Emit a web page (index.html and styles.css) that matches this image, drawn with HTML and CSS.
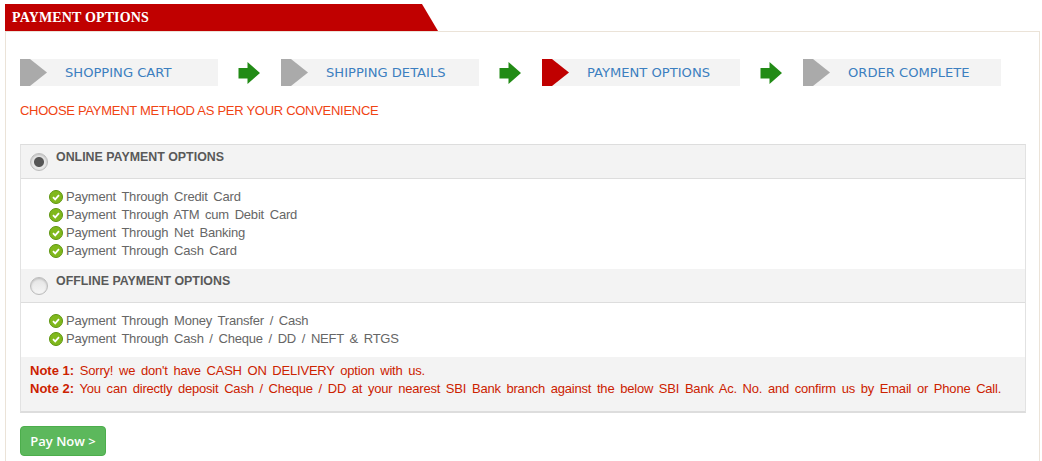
FILE: index.html
```html
<!DOCTYPE html>
<html lang="en">
<head>
    <meta charset="UTF-8">
    <meta name="viewport" content="width=device-width, initial-scale=1.0">
    <title>Payment Options</title>
    <link rel="stylesheet" href="styles.css">
</head>
<body>
    <div class="page">
        <div class="heading-row">
            <h1 class="heading">PAYMENT OPTIONS</h1>
            <svg class="heading-cut" width="16" height="27" viewBox="0 0 16 27"><polygon points="0,0 0,27 16,27" fill="#c00000"/></svg>
        </div>
        <div class="panel">
            <div class="steps">
                <div class="step">
                    <span class="step-mark"></span>
                    <span class="step-label">SHOPPING CART</span>
                </div>
                <svg class="step-arrow" width="22" height="22" viewBox="0 0 22 22"><polygon points="0.5,6 9.5,6 9.5,0 22,11 9.5,22 9.5,16.5 0.5,16.5" fill="#228b16"/></svg>
                <div class="step">
                    <span class="step-mark"></span>
                    <span class="step-label">SHIPPING DETAILS</span>
                </div>
                <svg class="step-arrow" width="22" height="22" viewBox="0 0 22 22"><polygon points="0.5,6 9.5,6 9.5,0 22,11 9.5,22 9.5,16.5 0.5,16.5" fill="#228b16"/></svg>
                <div class="step active">
                    <span class="step-mark"></span>
                    <span class="step-label">PAYMENT OPTIONS</span>
                </div>
                <svg class="step-arrow" width="22" height="22" viewBox="0 0 22 22"><polygon points="0.5,6 9.5,6 9.5,0 22,11 9.5,22 9.5,16.5 0.5,16.5" fill="#228b16"/></svg>
                <div class="step">
                    <span class="step-mark"></span>
                    <span class="step-label">ORDER COMPLETE</span>
                </div>
            </div>

            <h2 class="choose">CHOOSE PAYMENT METHOD AS PER YOUR CONVENIENCE</h2>

            <div class="methods">
                <div class="method-head">
                    <span class="radio checked"></span>
                    <h3>ONLINE PAYMENT OPTIONS</h3>
                </div>
                <ul class="method-list">
                    <li><svg class="tick" width="14" height="14" viewBox="0 0 14 14"><circle cx="7" cy="7" r="6.5" fill="#80b81c" stroke="#5d9410"/><path d="M4 7.2 6.2 9.4 10 5.2" fill="none" stroke="#fff" stroke-width="1.8"/></svg>Payment Through Credit Card</li>
                    <li><svg class="tick" width="14" height="14" viewBox="0 0 14 14"><circle cx="7" cy="7" r="6.5" fill="#80b81c" stroke="#5d9410"/><path d="M4 7.2 6.2 9.4 10 5.2" fill="none" stroke="#fff" stroke-width="1.8"/></svg>Payment Through ATM cum Debit Card</li>
                    <li><svg class="tick" width="14" height="14" viewBox="0 0 14 14"><circle cx="7" cy="7" r="6.5" fill="#80b81c" stroke="#5d9410"/><path d="M4 7.2 6.2 9.4 10 5.2" fill="none" stroke="#fff" stroke-width="1.8"/></svg>Payment Through Net Banking</li>
                    <li><svg class="tick" width="14" height="14" viewBox="0 0 14 14"><circle cx="7" cy="7" r="6.5" fill="#80b81c" stroke="#5d9410"/><path d="M4 7.2 6.2 9.4 10 5.2" fill="none" stroke="#fff" stroke-width="1.8"/></svg>Payment Through Cash Card</li>
                </ul>
                <div class="method-head">
                    <span class="radio"></span>
                    <h3>OFFLINE PAYMENT OPTIONS</h3>
                </div>
                <ul class="method-list short">
                    <li><svg class="tick" width="14" height="14" viewBox="0 0 14 14"><circle cx="7" cy="7" r="6.5" fill="#80b81c" stroke="#5d9410"/><path d="M4 7.2 6.2 9.4 10 5.2" fill="none" stroke="#fff" stroke-width="1.8"/></svg>Payment Through Money Transfer / Cash</li>
                    <li><svg class="tick" width="14" height="14" viewBox="0 0 14 14"><circle cx="7" cy="7" r="6.5" fill="#80b81c" stroke="#5d9410"/><path d="M4 7.2 6.2 9.4 10 5.2" fill="none" stroke="#fff" stroke-width="1.8"/></svg>Payment Through Cash / Cheque / DD / NEFT &amp; RTGS</li>
                </ul>
                <div class="notes">
                    <p><strong>Note 1:</strong> Sorry! we don't have CASH ON DELIVERY option with us.</p>
                    <p><strong>Note 2:</strong> You can directly deposit Cash / Cheque / DD at your nearest SBI Bank branch against the below SBI Bank Ac. No. and confirm us by Email or Phone Call.</p>
                </div>
            </div>

            <button class="pay-button">Pay Now &gt;</button>
        </div>
    </div>
</body>
</html>
```
FILE: styles.css
```css
* {
    margin: 0;
    padding: 0;
    box-sizing: border-box;
}
body {
    background-color: #fff;
    font-family: "Liberation Sans", Arial, sans-serif;
    overflow: hidden;
    height: 461px;
}
.page {
    padding: 4px 2px 0 5px;
}
.heading-row {
    display: flex;
    height: 27px;
}
.heading {
    background-color: #c00000;
    color: #fff;
    width: 417px;
    padding-left: 7px;
    font-family: "Liberation Serif", serif;
    font-size: 14px;
    font-weight: bold;
    letter-spacing: 0.15px;
    line-height: 27px;
}
.panel {
    border: 1px solid #ebe3d8;
    border-bottom: none;
    padding: 27px 13px 0 14px;
    height: 430px;
}
.steps {
    display: flex;
    align-items: center;
}
.step {
    display: flex;
    align-items: center;
    width: 198px;
    height: 27px;
    background-color: #f3f3f3;
}
.step-mark {
    width: 27px;
    height: 27px;
    background-color: #aaa;
    clip-path: polygon(0 0, 10px 0, 27px 13.5px, 10px 27px, 0 27px);
}
.step.active .step-mark {
    background-color: #c00000;
}
.step-label {
    margin-left: 18px;
    color: #3c7fc0;
    font-family: "DejaVu Sans", Verdana, sans-serif;
    font-size: 13.1px;
    white-space: nowrap;
}
.step-arrow {
    margin: 0 21px 0 20px;
}
.choose {
    margin-top: 16px;
    color: #f04313;
    font-size: 13px;
    font-weight: normal;
    letter-spacing: -0.28px;
    line-height: 18px;
}
.methods {
    margin-top: 24px;
    width: 1006px;
    height: 269px;
    border: 1px solid #e2e2e2;
    border-top-color: #ddd;
    border-bottom: 2px solid #ddd;
}
.method-head {
    display: flex;
    height: 34px;
    background-color: #f3f3f3;
    border-bottom: 1px solid #ddd;
}
.method-head h3 {
    margin: 5px 0 0 8px;
    color: #595959;
    font-size: 12.4px;
    font-weight: bold;
    line-height: 14px;
}
.radio {
    flex: none;
    width: 18px;
    height: 18px;
    margin: 8px 0 0 9px;
    border: 1px solid #bbb;
    border-radius: 50%;
    background: linear-gradient(#e4e4e4, #f6f6f6);
    box-shadow: inset 0 1px 2px #bbb;
}
.radio.checked {
    background: radial-gradient(circle, #555 0, #555 4.5px, #e6e6e6 5.5px);
}
.method-list {
    list-style-type: none;
    height: 90px;
    padding: 9px 0 0 28px;
    color: #666;
    font-size: 13px;
    letter-spacing: -0.2px;
    line-height: 18px;
    word-spacing: 2.3px;
}
.method-list.short {
    height: 54px;
}
.tick {
    margin-right: 3px;
    vertical-align: -3px;
}
.notes {
    height: 54px;
    padding: 5px 0 0 9px;
    background-color: #f3f3f3;
    color: #cc2200;
    font-size: 13px;
    letter-spacing: -0.2px;
    line-height: 18px;
    word-spacing: 2.3px;
}
.notes strong {
    letter-spacing: 0;
    word-spacing: 0;
}
.pay-button {
    display: block;
    margin-top: 13px;
    width: 86px;
    height: 30px;
    background-color: #5cb85c;
    border: 1px solid #4cae4c;
    border-radius: 4px;
    color: #fff;
    font-family: "Open Sans", sans-serif;
    font-size: 13px;
    font-weight: 600;
}
```
